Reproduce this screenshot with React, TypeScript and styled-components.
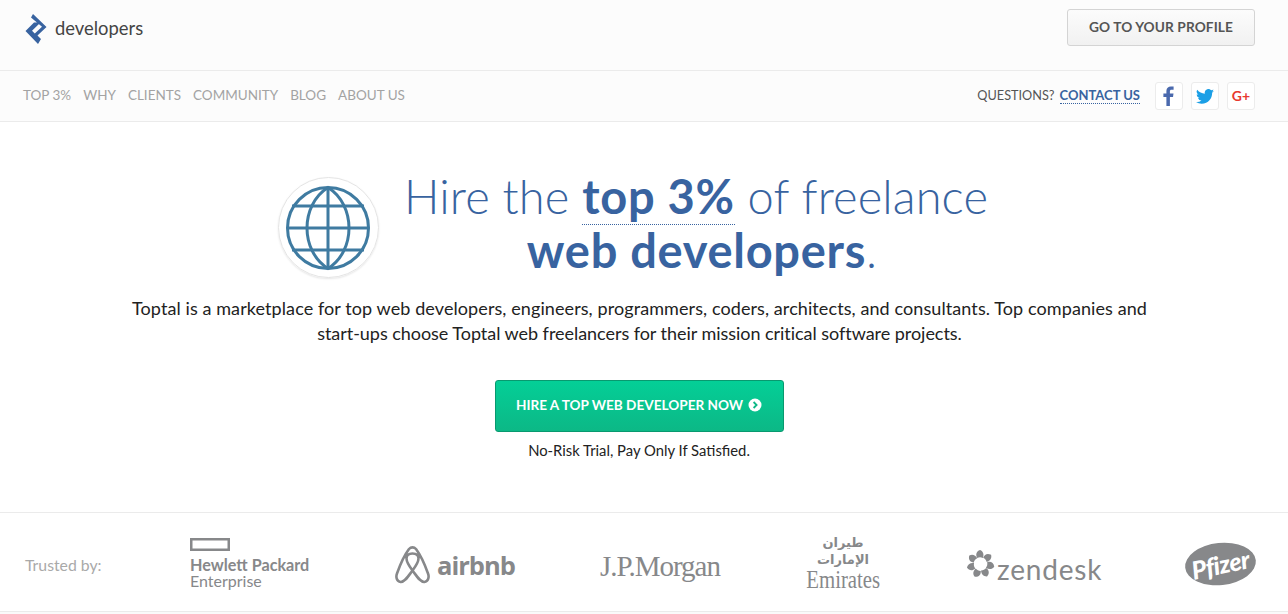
import styled, { createGlobalStyle } from "styled-components";

const BLUE = "#3863a0";
const LOGO_GREY = "#87888a";
const FONT = `Lato, "Open Sans", "Liberation Sans", sans-serif`;

const GlobalStyle = createGlobalStyle`
  html, body {
    margin: 0;
    padding: 0;
    background: #fafafa;
    font-family: ${FONT};
  }
  * { box-sizing: border-box; }
`;

const NAV_ITEMS = ["TOP 3%", "WHY", "CLIENTS", "COMMUNITY", "BLOG", "ABOUT US"];

function ToptalMark() {
  return (
    <svg width="22" height="30" viewBox="0 0 22 30">
      <path
        fill={BLUE}
        d="M8 0 L21.500 13 L12.500 21.500 L16 25 L13 30 L0.500 17 L9 8.500 L15.500 8.500 L7 16.800 L9.800 19.600 L17 12.800 L6 3.500 Z"
      />
    </svg>
  );
}

function Globe() {
  return (
    <svg width="86" height="86" viewBox="0 0 86 86" fill="none" stroke="#3f7ba1" strokeWidth="3">
      <circle cx="43" cy="43" r="40.5" />
      <path d="M43 2.500C15 20 15 66 43 83.500C71 66 71 20 43 2.500Z" />
      <path d="M43 2.500V83.500M2.500 43H83.500M7 21H79M7 65H79" />
    </svg>
  );
}

function ArrowDot() {
  return (
    <svg width="14" height="14" viewBox="0 0 14 14">
      <circle cx="7" cy="7" r="6.500" fill="#fff" />
      <path d="M5.600 4 L8.600 7 L5.600 10" fill="none" stroke="#0cb886" strokeWidth="1.800" />
    </svg>
  );
}

function Facebook() {
  return (
    <svg width="12" height="20" viewBox="0 0 12 20">
      <path
        fill="#4a69ad"
        d="M3.400 20V11H0.400V7.500H3.400V5C3.400 2 5.200 0.400 7.900 0.400C9.200 0.400 10.300 0.500 10.600 0.500V3.700H8.700C7.200 3.700 6.900 4.400 6.900 5.400V7.500H10.500L10 11H6.900V20Z"
      />
    </svg>
  );
}

function Twitter() {
  return (
    <svg width="18" height="15" viewBox="0 0 24 20">
      <path
        fill="#1b9fe6"
        d="M24 2.400a9.800 9.800 0 0 1-2.800.8A4.900 4.900 0 0 0 23.300.5a9.800 9.800 0 0 1-3.100 1.200 4.900 4.900 0 0 0-8.400 4.500A14 14 0 0 1 1.700.9a4.900 4.900 0 0 0 1.500 6.600 4.900 4.900 0 0 1-2.200-.6v.1a4.900 4.900 0 0 0 3.900 4.800 4.900 4.900 0 0 1-2.200.1 4.900 4.900 0 0 0 4.600 3.400A9.900 9.900 0 0 1 0 17.300 14 14 0 0 0 7.500 19.500c9.100 0 14-7.500 14-14v-.6A10 10 0 0 0 24 2.400Z"
      />
    </svg>
  );
}

function HpeMark() {
  return (
    <svg width="40" height="13" viewBox="0 0 40 13" fill="none" stroke={LOGO_GREY} strokeWidth="2.500">
      <rect x="1.250" y="1.250" width="37.500" height="10.500" />
    </svg>
  );
}

function AirbnbMark() {
  return (
    <svg width="35" height="38" viewBox="0 0 35 38" fill="none" stroke={LOGO_GREY} strokeWidth="2.600">
      <path d="M17.500 24.500C13 18.500 11.500 15 11.500 12.500C11.500 9.200 14 7.500 17.500 7.500C21 7.500 23.500 9.200 23.500 12.500C23.500 15 22 18.500 17.500 24.500ZM17.500 24.500C22 30.500 25.500 36.500 29.500 36C33 35.500 34.500 31.500 33 27.500C30 19 24 7 21 3C19 0.800 16 0.800 14 3C11 7 5 19 2 27.500C0.500 31.500 2 35.500 5.500 36C9.500 36.500 13 30.500 17.500 24.500Z" />
    </svg>
  );
}

function ZendeskMark() {
  const petals = [0, 51, 103, 154, 206, 257, 309];
  return (
    <svg width="29" height="28" viewBox="0 0 30 30">
      {petals.map((angle) => (
        <path
          key={angle}
          fill={LOGO_GREY}
          transform={`rotate(${angle} 15 15)`}
          d="M11.500 8.500C9.500 5 10.500 1.500 14.500 0C18 1.500 19 5 17.500 8.500C15.500 7.500 13.500 7.500 11.500 8.500Z"
        />
      ))}
    </svg>
  );
}

function App() {
  return (
    <>
      <GlobalStyle />
      <TopBar>
        <Brand>
          <ToptalMark />
          <BrandName>developers</BrandName>
        </Brand>
        <ProfileButton>GO TO YOUR PROFILE</ProfileButton>
      </TopBar>
      <NavBar>
        <NavList>
          {NAV_ITEMS.map((item) => (
            <NavLink key={item}>{item}</NavLink>
          ))}
        </NavList>
        <NavRight>
          <Questions>QUESTIONS?</Questions>
          <ContactLink>CONTACT US</ContactLink>
          <SocialRow>
            <SocialButton><Facebook /></SocialButton>
            <SocialButton><Twitter /></SocialButton>
            <SocialButton><GooglePlus>G+</GooglePlus></SocialButton>
          </SocialRow>
        </NavRight>
      </NavBar>
      <Hero>
        <HeadingRow>
          <GlobeBadge><Globe /></GlobeBadge>
          <Heading>
            <HeadingLine>
              Hire the <Dotted>top 3%</Dotted> of freelance
            </HeadingLine>
            <HeadingSecondLine>
              <strong>web developers</strong>.
            </HeadingSecondLine>
          </Heading>
        </HeadingRow>
        <Lead>
          Toptal is a marketplace for top web developers, engineers, programmers, coders, architects, and consultants. Top companies and
          <br />
          <LeadTail>start-ups choose Toptal web freelancers for their mission critical software projects.</LeadTail>
        </Lead>
        <HireButton>
          HIRE A TOP WEB DEVELOPER NOW <ArrowDot />
        </HireButton>
        <Note>No-Risk Trial, Pay Only If Satisfied.</Note>
      </Hero>
      <Trusted>
        <TrustedLabel>Trusted by:</TrustedLabel>
        <LogoRow>
          <Hpe>
            <HpeMark />
            <HpeBold>Hewlett Packard</HpeBold>
            <HpeLight>Enterprise</HpeLight>
          </Hpe>
          <Airbnb>
            <AirbnbMark />
            <AirbnbName>airbnb</AirbnbName>
          </Airbnb>
          <Morgan>J.P.Morgan</Morgan>
          <Emirates>
            <EmiratesArabic>طيران<br />الإمارات</EmiratesArabic>
            <EmiratesName>Emirates</EmiratesName>
          </Emirates>
          <Zendesk>
            <ZendeskMark />
            <ZendeskName>zendesk</ZendeskName>
          </Zendesk>
          <Pfizer><PfizerName>Pfizer</PfizerName></Pfizer>
        </LogoRow>
      </Trusted>
    </>
  );
}

const TopBar = styled.header`
  display: flex;
  justify-content: space-between;
  align-items: flex-start;
  height: 71px;
  padding: 9px 33px 0 25px;
  background: #fcfcfc;
  border-bottom: 1px solid #ebebeb;
`;

const Brand = styled.div`
  display: flex;
  align-items: center;
  gap: 8px;
  margin-top: 5px;
`;

const BrandName = styled.span`
  font-size: 18.400px;
  color: #444;
  margin-top: -3px;
`;

const ProfileButton = styled.div`
  width: 188px;
  height: 37px;
  padding-bottom: 2px;
  display: flex;
  align-items: center;
  justify-content: center;
  font-size: 13.700px;
  font-weight: 700;
  color: #555;
  letter-spacing: 0.1px;
  border: 1px solid #d4d4d4;
  border-radius: 3px;
  background: linear-gradient(#fcfcfc, #f1f1f1);
`;

const NavBar = styled.nav`
  display: flex;
  justify-content: space-between;
  align-items: center;
  height: 51px;
  padding: 0 33px 0 23px;
  background: #fcfcfc;
  border-bottom: 1px solid #ebebeb;
`;

const NavList = styled.div`
  display: flex;
  gap: 12px;
  margin-top: -2px;
`;

const NavLink = styled.span`
  font-size: 13.500px;
  color: #a3a3a3;
`;

const NavRight = styled.div`
  display: flex;
  align-items: center;
`;

const Questions = styled.span`
  font-size: 12.700px;
  color: #555;
  margin: -2px 5px 0 0;
`;

const ContactLink = styled.span`
  font-size: 13px;
  font-weight: 700;
  color: ${BLUE};
  border-bottom: 1px dotted ${BLUE};
  line-height: 15px;
  margin-top: -1px;
`;

const SocialRow = styled.div`
  display: flex;
  gap: 8px;
  margin-left: 15px;
`;

const SocialButton = styled.div`
  width: 28px;
  height: 28px;
  display: flex;
  align-items: center;
  justify-content: center;
  border: 1px solid #ececec;
  border-radius: 3px;
  background: #fff;
`;

const GooglePlus = styled.span`
  font-size: 14px;
  font-weight: 700;
  color: #e8392f;
  margin-top: -1px;
`;

const Hero = styled.main`
  display: flex;
  flex-direction: column;
  align-items: center;
  height: 390px;
  padding-top: 55px;
  background: #fff;
`;

const HeadingRow = styled.div`
  display: flex;
  align-items: center;
  gap: 25px;
  height: 101px;
  margin-left: -22px;
`;

const GlobeBadge = styled.div`
  width: 101px;
  height: 101px;
  display: flex;
  align-items: center;
  justify-content: center;
  border: 1px solid #e4e4e4;
  border-radius: 50%;
  box-shadow: 0 1px 2px rgba(0, 0, 0, 0.1);
`;

const Heading = styled.h1`
  margin: -10px 0 0;
  font-size: 47px;
  font-weight: 300;
  letter-spacing: 0.1px;
  color: ${BLUE};
  text-align: center;
  white-space: nowrap;
  strong { font-weight: 700; letter-spacing: 0.7px; }
`;

const HeadingLine = styled.div`
  line-height: 54px;
`;

const HeadingSecondLine = styled(HeadingLine)`
  padding-left: 12px;
`;

const Dotted = styled.strong`
  border-bottom: 1px dotted ${BLUE};
`;

const Lead = styled.p`
  margin: 18px 0 0 -9px;
  font-size: 18px;
  letter-spacing: 0.09px;
  line-height: 25px;
  color: #222;
  text-align: center;
  white-space: nowrap;
`;

const LeadTail = styled.span`
  letter-spacing: -0.04px;
`;

const HireButton = styled.div`
  width: 289px;
  height: 52px;
  padding-bottom: 2px;
  margin: 34px 10px 0 0;
  display: flex;
  align-items: center;
  justify-content: center;
  gap: 5px;
  font-size: 13.600px;
  font-weight: 700;
  color: #fff;
  border: 1px solid #08996f;
  border-radius: 3px;
  background: linear-gradient(#04cf97, #0cb886);
`;

const Note = styled.div`
  margin: 9px 10px 0 0;
  font-size: 14.800px;
  line-height: 18px;
  color: #222;
`;

const Trusted = styled.section`
  display: flex;
  align-items: center;
  height: 100px;
  padding-left: 25px;
  background: #fff;
  border-top: 1px solid #ebebeb;
  border-bottom: 1px solid #ebebeb;
`;

const TrustedLabel = styled.span`
  width: 165px;
  margin-top: 4px;
  font-size: 15.800px;
  color: #a9a9a9;
  flex-shrink: 0;
`;

const LogoRow = styled.div`
  flex: 1;
  display: grid;
  grid-template-columns: 205px 205px 205px 161px 219px auto;
  align-items: center;
  color: ${LOGO_GREY};
`;

const Hpe = styled.div`
  display: flex;
  flex-direction: column;
  align-items: flex-start;
  margin-top: 3px;
`;

const HpeBold = styled.span`
  font-size: 16.200px;
  font-weight: 700;
  line-height: 16px;
  margin-top: 6px;
`;

const HpeLight = styled.span`
  font-size: 16px;
  line-height: 16px;
`;

const Airbnb = styled.div`
  display: flex;
  align-items: center;
  gap: 7px;
  margin-top: 5px;
`;

const AirbnbName = styled.span`
  font-family: "Open Sans", sans-serif;
  font-size: 25.500px;
  font-weight: 700;
  letter-spacing: -1px;
`;

const Morgan = styled.span`
  font-family: "Liberation Serif", serif;
  font-size: 29px;
  letter-spacing: -1px;
  margin-top: 9px;
`;

const Emirates = styled.div`
  width: 76px;
  display: flex;
  flex-direction: column;
  align-items: center;
  margin-top: 2px;
`;

const EmiratesArabic = styled.span`
  font-family: "DejaVu Sans", sans-serif;
  font-size: 13px;
  font-weight: 700;
  line-height: 17px;
  text-align: center;
`;

const EmiratesName = styled.span`
  font-family: "Liberation Serif", serif;
  font-size: 26px;
  line-height: 24px;
  white-space: nowrap;
  transform: scaleX(0.800);
`;

const Zendesk = styled.div`
  display: flex;
  align-items: center;
  gap: 2px;
  margin-top: 4px;
`;

const ZendeskName = styled.span`
  font-size: 28px;
  line-height: 32px;
  letter-spacing: 0.800px;
  margin-top: 10px;
`;

const Pfizer = styled.div`
  width: 71px;
  height: 42px;
  margin-top: 4px;
  display: flex;
  align-items: center;
  justify-content: center;
  border-radius: 50%;
  background: ${LOGO_GREY};
  transform: rotate(-6deg);
`;

const PfizerName = styled.span`
  color: #fff;
  font-size: 25px;
  font-weight: 900;
  font-style: italic;
  letter-spacing: -0.500px;
  transform: rotate(-6deg);
`;

export default App;
